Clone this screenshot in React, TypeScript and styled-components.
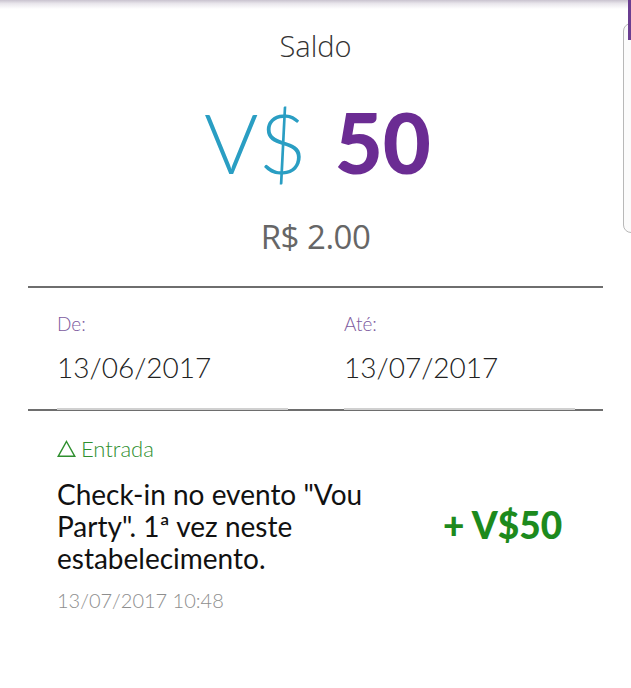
import React from "react";
import styled, { createGlobalStyle } from "styled-components";

const Global = createGlobalStyle`
  html, body { margin: 0; padding: 0; background: #fff; }
  body { font-family: Lato, "Open Sans", sans-serif; width: 631px; height: 688px; overflow: hidden; }
`;

const Screen = styled.div`
  position: relative;
  width: 631px;
  height: 688px;
  background: #fff;
  overflow: hidden;
`;

const TopShadow = styled.div`
  position: absolute;
  left: 0; top: 0; right: 0;
  height: 9px;
  background: linear-gradient(to bottom, #c9c3cf 0%, #e9e6ec 40%, rgba(255,255,255,0) 100%);
`;

const EdgeBar = styled.div`
  position: absolute;
  right: 0; top: 0;
  width: 3px; height: 40px;
  background: #6a3d91;
`;

const EdgeHandle = styled.div`
  position: absolute;
  left: 623px; top: 23px;
  width: 20px; height: 208px;
  border: 1px solid #b8b8b8;
  border-radius: 8px;
  background: #fbfbfb;
`;

const Balance = styled.section`
  display: flex;
  flex-direction: column;
  align-items: center;
  padding-top: 26px;
`;

const Title = styled.div`
  font-family: "Open Sans", sans-serif;
  font-weight: 300;
  font-size: 29px;
  line-height: 40px;
  color: #333;
`;

const Amount = styled.div`
  display: flex;
  align-items: baseline;
  gap: 28px;
  margin-top: 28px;
  height: 96px;
  line-height: 96px;
  font-family: Lato, sans-serif;
  font-size: 83px;
  margin-left: 4px;
`;

const Currency = styled.span`
  color: #2a9ec3;
  font-weight: 300;
`;

const Points = styled.span`
  color: #6b2c93;
  font-weight: 900;
`;

const Real = styled.div`
  margin-top: 27px;
  font-family: "Open Sans", sans-serif;
  font-size: 33px;
  line-height: 40px;
  color: #666;
  letter-spacing: -0.5px;
`;

const Divider = styled.hr`
  margin: 0 28px;
  border: none;
  height: 2px;
  background: #6e6e6e;
`;

const DividerTop = styled(Divider)`
  margin-top: 29px;
`;

const Range = styled.section`
  display: grid;
  grid-template-columns: 231px 231px;
  column-gap: 56px;
  padding: 24px 0 0 57px;
`;

const Field = styled.div`
  display: flex;
  flex-direction: column;
`;

const FieldLabel = styled.div`
  font-family: Lato, sans-serif;
  font-weight: 300;
  font-size: 19px;
  line-height: 24px;
  color: #7c5a9e;
`;

const FieldValue = styled.div`
  margin-top: 14px;
  font-family: Lato, sans-serif;
  font-weight: 300;
  font-size: 28px;
  line-height: 34px;
  color: #222;
  padding-bottom: 24px;
  border-bottom: 2px solid #d0d0d0;
`;

const DividerBottom = styled(Divider)`
  margin-top: -1px;
`;

const Entry = styled.section`
  padding: 25px 0 0 57px;
`;

const Tag = styled.div`
  display: flex;
  align-items: center;
  gap: 5px;
  font-family: Lato, sans-serif;
  font-weight: 300;
  font-size: 22px;
  line-height: 26px;
  color: #2f8f2f;
`;

const EntryRow = styled.div`
  display: flex;
  align-items: center;
  margin-top: 16px;
`;

const Description = styled.div`
  width: 330px;
  font-family: Lato, sans-serif;
  font-weight: 400;
  font-size: 28px;
  line-height: 32px;
  color: #111;
`;

const Value = styled.div`
  margin-left: 56px;
  font-family: Lato, sans-serif;
  font-weight: 900;
  font-size: 37px;
  color: #1d8a1d;
  margin-top: -4px;
`;

const Stamp = styled.div`
  margin-top: 14px;
  font-family: Lato, sans-serif;
  font-weight: 300;
  font-size: 20px;
  line-height: 24px;
  color: #8e8e8e;
`;

export default function App() {
  return (
    <Screen>
      <Global />
      <Balance>
        <Title>Saldo</Title>
        <Amount>
          <Currency>V$</Currency>
          <Points>50</Points>
        </Amount>
        <Real>R$ 2.00</Real>
      </Balance>
      <DividerTop />
      <Range>
        <Field>
          <FieldLabel>De:</FieldLabel>
          <FieldValue>13/06/2017</FieldValue>
        </Field>
        <Field>
          <FieldLabel>Até:</FieldLabel>
          <FieldValue>13/07/2017</FieldValue>
        </Field>
      </Range>
      <DividerBottom />
      <Entry>
        <Tag>
          <svg width="19" height="18" viewBox="0 0 19 18">
            <path d="M9.5 1.5 L17.8 16.3 H1.2 Z" fill="none" stroke="#2f8f2f" strokeWidth="1.4" />
          </svg>
          Entrada
        </Tag>
        <EntryRow>
          <Description>Check-in no evento "Vou Party". 1ª vez neste estabelecimento.</Description>
          <Value>+ V$50</Value>
        </EntryRow>
        <Stamp>13/07/2017 10:48</Stamp>
      </Entry>
      <TopShadow />
      <EdgeHandle />
      <EdgeBar />
    </Screen>
  );
}
